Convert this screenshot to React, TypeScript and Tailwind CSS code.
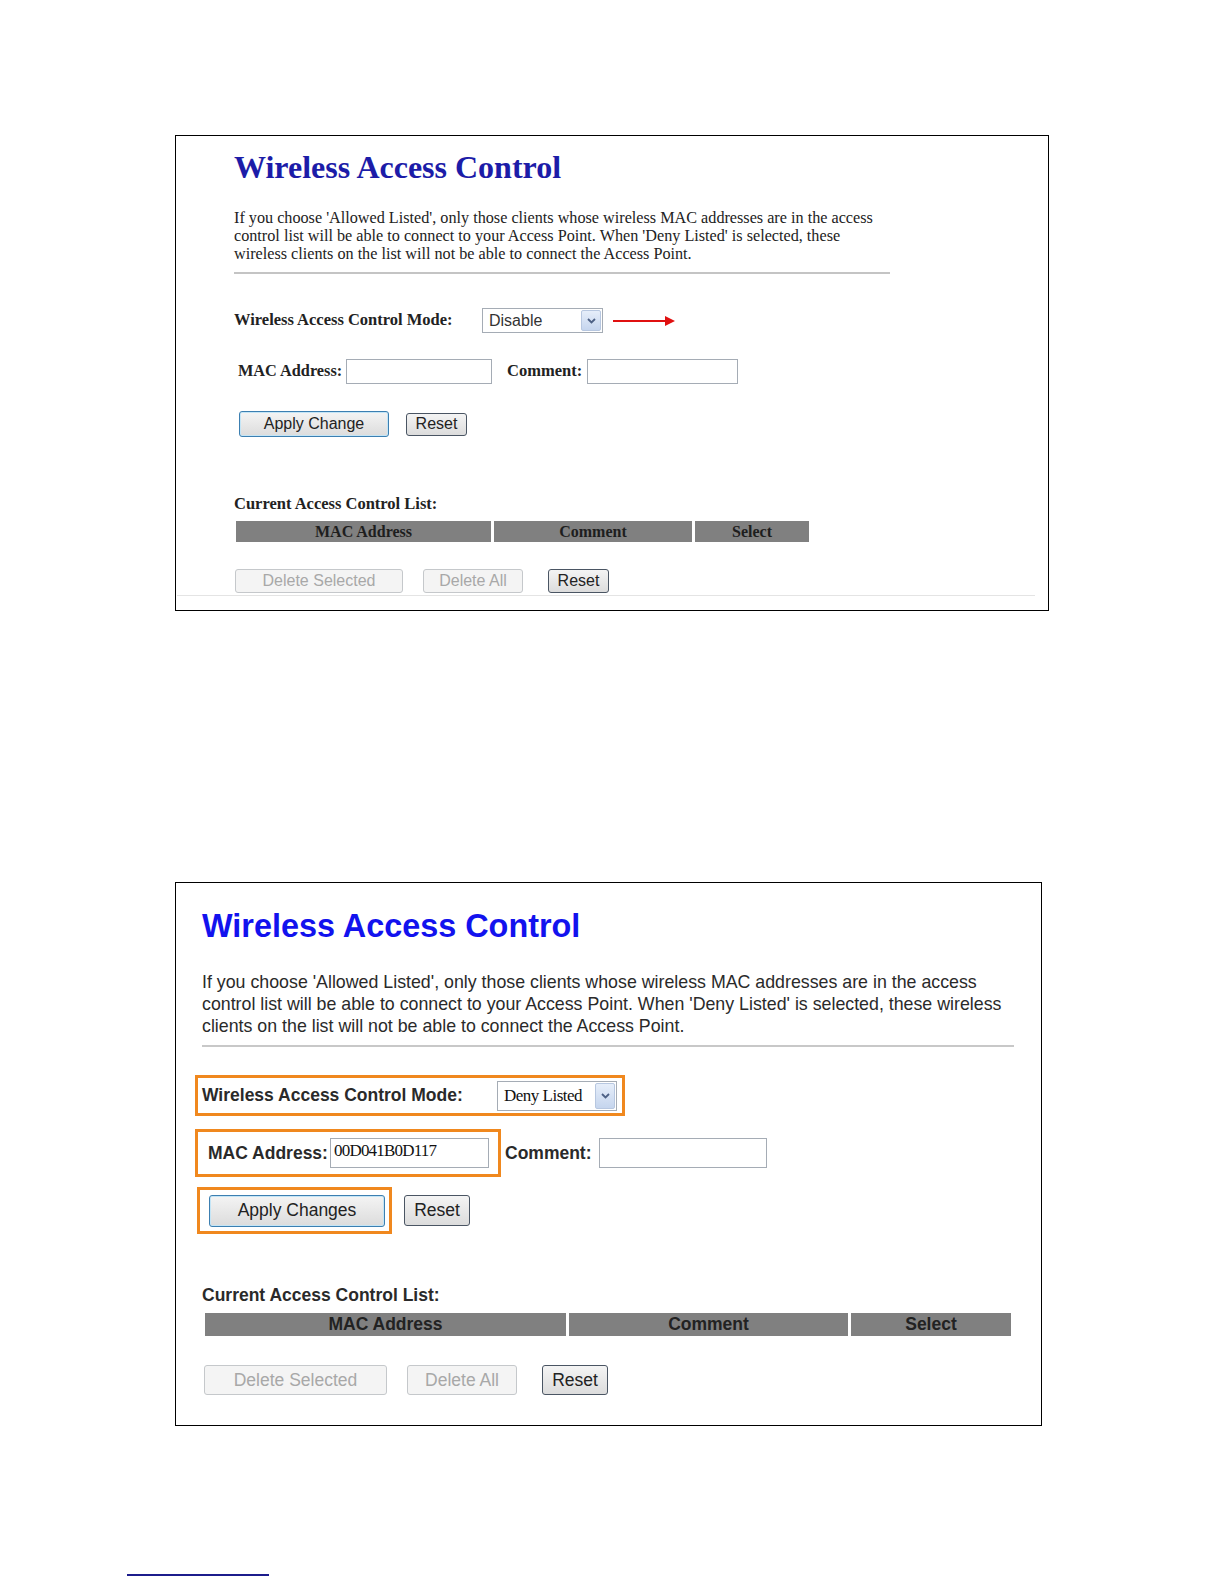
import React from 'react';

const serif = "font-['Liberation_Serif','Times_New_Roman',serif]";
const sans = "font-['Liberation_Sans',Arial,sans-serif]";

function Chevron() {
  return (
    <svg width="9" height="6" viewBox="0 0 9 6">
      <path d="M1 1l3.5 3.5L8 1" fill="none" stroke="#4d6185" strokeWidth="1.8" />
    </svg>
  );
}

function Select({ value, w, h, textClass }: { value: string; w: string; h: string; textClass: string }) {
  return (
    <div className={`flex items-stretch border border-[#a5acb5] bg-white ${w} ${h}`}>
      <div className={`flex-1 flex items-center pl-[6px] ${textClass}`}>{value}</div>
      <div className="w-[20px] m-[1px] flex items-center justify-center bg-gradient-to-b from-[#e6eefa] to-[#c5d5ee] border border-[#b7c7e0] rounded-[2px]">
        <Chevron />
      </div>
    </div>
  );
}

function Btn({ label, cls, disabled, focus }: { label: string; cls: string; disabled?: boolean; focus?: boolean }) {
  const look = disabled
    ? 'border-[#c5c8cb] bg-[#f4f4f4] text-[#a8a8a8]'
    : focus
      ? 'border-[#3c7fb1] bg-gradient-to-b from-[#f4f4f4] to-[#dcdcdc] text-[#222] shadow-[inset_0_0_0_1px_#c4e5f6]'
      : 'border-[#4a5563] bg-gradient-to-b from-[#f4f4f4] to-[#dcdcdc] text-[#222]';
  return (
    <div className={`flex items-center justify-center border rounded-[3px] whitespace-nowrap ${look} ${cls}`}>{label}</div>
  );
}

function TopPanel() {
  return (
    <div className={`ml-[175px] w-[874px] h-[476px] border border-black ${serif} text-[#222]`}>
      <div className="pl-[58px] pt-[13px]">
        <h1 className="h-[36px] leading-[36px] text-[32px] font-bold text-[#1c1ca8]">Wireless Access Control</h1>
        <p className="mt-[24px] text-[16.2px] leading-[18px] whitespace-nowrap">
          If you choose 'Allowed Listed', only those clients whose wireless MAC addresses are in the access
          <br />
          control list will be able to connect to your Access Point. When 'Deny Listed' is selected, these
          <br />
          wireless clients on the list will not be able to connect the Access Point.
        </p>
        <div className="mt-[9px] w-[656px] h-[2px] bg-[#c4c4c4]" />

        <div className="mt-[34px] flex items-center h-[25px]">
          <div className="w-[248px] text-[16.5px] font-bold">Wireless Access Control Mode:</div>
          <Select value="Disable" w="w-[121px]" h="h-[25px]" textClass={`${sans} text-[16px] text-[#333]`} />
          <div className="ml-[10px] flex items-center">
            <div className="w-[52px] h-[2px] bg-[#e01010]" />
            <svg width="10" height="10" viewBox="0 0 10 10">
              <path d="M0 0L10 5L0 10Z" fill="#e01010" />
            </svg>
          </div>
        </div>

        <div className="mt-[26px] flex items-center h-[25px] ml-[4px]">
          <div className="w-[108px] text-[16.3px] font-bold">MAC Address:</div>
          <div className="w-[146px] h-[25px] border border-[#a5acb5] bg-white" />
          <div className="ml-[15px] w-[80px] text-[16.5px] font-bold">Comment:</div>
          <div className="w-[151px] h-[25px] border border-[#a5acb5] bg-white" />
        </div>

        <div className={`mt-[27px] flex items-center h-[26px] ml-[5px] ${sans} text-[16px]`}>
          <Btn label="Apply Change" cls="w-[150px] h-[26px]" focus />
          <Btn label="Reset" cls="ml-[17px] w-[61px] h-[23px]" />
        </div>

        <div className="mt-[58px] h-[18px] leading-[18px] text-[16.5px] font-bold">Current Access Control List:</div>
        <div className="mt-[8px] ml-[2px] flex gap-[3px] h-[21px] text-[16px] font-bold text-[#1e1e1e]">
          <div className="w-[255px] bg-[#808080] flex items-center justify-center">MAC Address</div>
          <div className="w-[198px] bg-[#808080] flex items-center justify-center">Comment</div>
          <div className="w-[114px] bg-[#808080] flex items-center justify-center">Select</div>
        </div>

        <div className={`mt-[27px] ml-[1px] flex items-center h-[24px] ${sans} text-[16px]`}>
          <Btn label="Delete Selected" cls="w-[168px] h-[24px]" disabled />
          <Btn label="Delete All" cls="ml-[20px] w-[100px] h-[24px]" disabled />
          <Btn label="Reset" cls="ml-[25px] w-[61px] h-[24px]" />
        </div>
      </div>
      <div className="mt-[2px] ml-[1px] w-[858px] h-[1px] bg-[#e4e4e4]" />
    </div>
  );
}

function BottomPanel() {
  return (
    <div className={`ml-[175px] w-[867px] h-[544px] border border-black ${sans} text-[#222]`}>
      <div className="pt-[25px]">
        <h1 className="ml-[26px] h-[36px] leading-[36px] text-[32.4px] font-bold text-[#1212ee]">Wireless Access Control</h1>
        <p className="mt-[27px] ml-[26px] text-[17.8px] leading-[22px] whitespace-nowrap text-[#2a2a2a]">
          If you choose 'Allowed Listed', only those clients whose wireless MAC addresses are in the access
          <br />
          control list will be able to connect to your Access Point. When 'Deny Listed' is selected, these wireless
          <br />
          clients on the list will not be able to connect the Access Point.
        </p>
        <div className="mt-[8px] ml-[26px] w-[812px] h-[2px] bg-[#c8c8c8]" />

        <div className="mt-[28px] ml-[19px] w-[430px] h-[41px] border-[3px] border-[#f0881e] flex items-center pl-[4px]">
          <div className="w-[295px] text-[17.5px] font-bold text-[#2a2a2a]">Wireless Access Control Mode:</div>
          <Select value="Deny Listed" w="w-[120px]" h="h-[30px]" textClass={`${serif} text-[17px] tracking-[-0.5px] text-[#111]`} />
        </div>

        <div className="mt-[13px] ml-[19px] flex items-center">
          <div className="w-[306px] h-[48px] border-[3px] border-[#f0881e] flex items-center pl-[10px]">
            <div className="w-[122px] text-[17.5px] font-bold text-[#2a2a2a]">MAC Address:</div>
            <div className={`w-[159px] h-[30px] border border-[#a5acb5] bg-white pl-[3px] leading-[24px] ${serif} text-[17px] tracking-[-0.8px] text-[#111]`}>00D041B0D117</div>
          </div>
          <div className="ml-[4px] w-[94px] text-[17.5px] font-bold text-[#2a2a2a]">Comment:</div>
          <div className="w-[168px] h-[30px] border border-[#a5acb5] bg-white" />
        </div>

        <div className="mt-[10px] ml-[21px] flex items-center">
          <div className="w-[195px] h-[47px] border-[3px] border-[#f0881e] flex items-center pl-[9px]">
            <Btn label="Apply Changes" cls="w-[176px] h-[32px] text-[17.5px]" focus />
          </div>
          <Btn label="Reset" cls="ml-[12px] w-[66px] h-[31px] text-[17.5px]" />
        </div>

        <div className="mt-[50px] ml-[26px] h-[22px] leading-[22px] text-[17.5px] font-bold text-[#2a2a2a]">Current Access Control List:</div>
        <div className="mt-[7px] ml-[29px] flex gap-[3px] h-[23px] text-[17.5px] font-bold text-[#222]">
          <div className="w-[361px] bg-[#808080] flex items-center justify-center">MAC Address</div>
          <div className="w-[279px] bg-[#808080] flex items-center justify-center">Comment</div>
          <div className="w-[160px] bg-[#808080] flex items-center justify-center">Select</div>
        </div>

        <div className="mt-[29px] ml-[28px] flex items-center h-[30px] text-[17.5px]">
          <Btn label="Delete Selected" cls="w-[183px] h-[30px]" disabled />
          <Btn label="Delete All" cls="ml-[20px] w-[110px] h-[30px]" disabled />
          <Btn label="Reset" cls="ml-[25px] w-[66px] h-[30px]" />
        </div>
      </div>
    </div>
  );
}

export default function App() {
  return (
    <div className="w-[1224px] h-[1584px] bg-white pt-[135px] overflow-hidden">
      <TopPanel />
      <div className="h-[271px]" />
      <BottomPanel />
      <div className="mt-[148px] ml-[127px] w-[142px] h-[2px] bg-[#1c1c8c]" />
    </div>
  );
}
